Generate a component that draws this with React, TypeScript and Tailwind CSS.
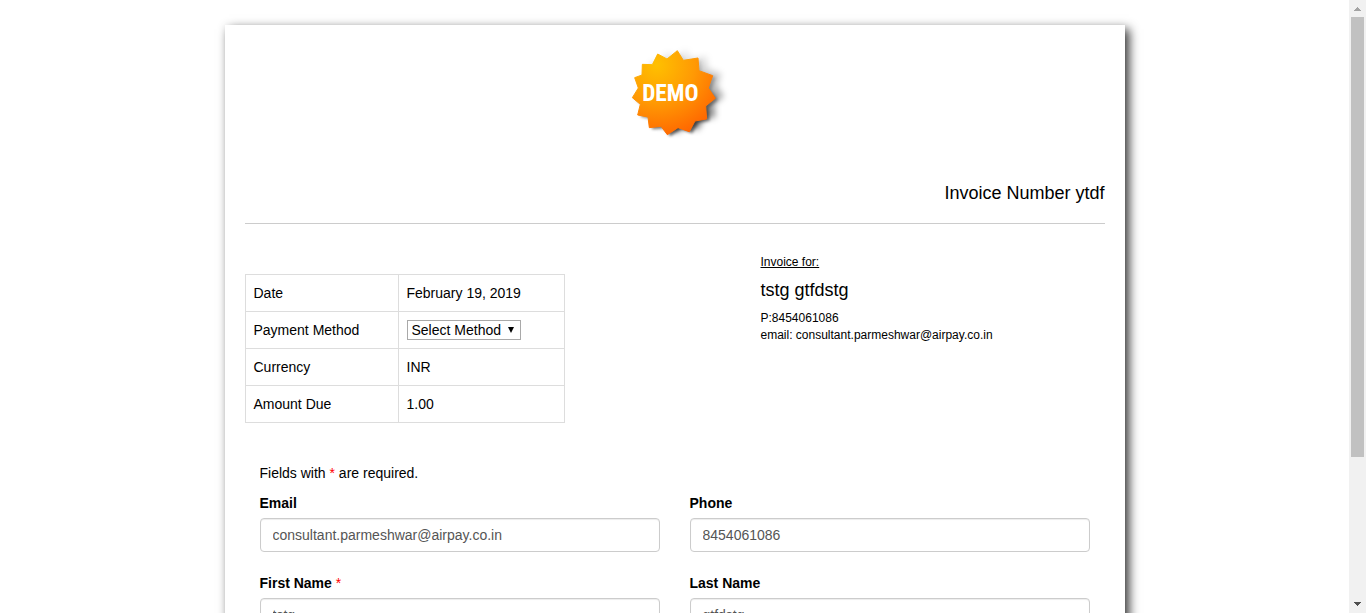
import React from "react";

function DemoBadge() {
  return (
    <svg viewBox="0 0 390 345" className="h-[115px] w-[130px]" role="img" aria-label="Demo">
      <defs>
        <radialGradient id="badge-fill" gradientUnits="userSpaceOnUse" cx="140" cy="90" r="225">
          <stop offset="0" stopColor="#ffc000" />
          <stop offset="0.5" stopColor="#ff9a04" />
          <stop offset="1" stopColor="#ff6400" />
        </radialGradient>
        <linearGradient id="badge-shade" x1="0" y1="0" x2="0" y2="1">
          <stop offset="0" stopColor="#000" stopOpacity="0.04" />
          <stop offset="0.5" stopColor="#000" stopOpacity="0.3" />
          <stop offset="1" stopColor="#000" stopOpacity="0.6" />
        </linearGradient>
        <filter id="badge-soft" x="-20%" y="-20%" width="140%" height="140%">
          <feGaussianBlur stdDeviation="9" />
        </filter>
        <filter id="badge-tight" x="-20%" y="-20%" width="140%" height="140%">
          <feGaussianBlur stdDeviation="4" />
        </filter>
        <path
          id="badge-star"
          strokeLinejoin="round"
          d="M202 47 220 76 264 69 267 107 308 122 295 159 316 190 287 213 290 252 255 258 238 290 204 278 172 299 153 274 118 278 114 246 83 240 91 208 67 188 85 159 74 128 96 120 97 88 127 89 143 57 171 72Z"
        />
      </defs>
      <use href="#badge-star" transform="translate(26 -6)" fill="url(#badge-shade)" filter="url(#badge-soft)" />
      <use href="#badge-star" transform="translate(9 5)" fill="url(#badge-shade)" filter="url(#badge-tight)" />
      <use href="#badge-star" fill="url(#badge-fill)" stroke="url(#badge-fill)" strokeWidth="3" />
      <text
        x="181"
        y="199"
        textAnchor="middle"
        fill="#fff"
        fontSize="70"
        fontWeight="700"
        fontFamily="'Liberation Sans Narrow', 'Roboto Condensed', 'Liberation Sans', Arial, sans-serif"
      >
        DEMO
      </text>
    </svg>
  );
}

function Row({ label, children }: { label: React.ReactNode; children: React.ReactNode }) {
  return (
    <tr>
      <th scope="row" className="w-[153px] border border-[#ddd] p-2 text-left font-normal">
        {label}
      </th>
      <td className="border border-[#ddd] p-2">{children}</td>
    </tr>
  );
}

function Field({ id, label, value, type = "text", required = false }: {
  id: string;
  label: string;
  value: string;
  type?: string;
  required?: boolean;
}) {
  return (
    <div>
      <label htmlFor={id} className="mb-[5px] block font-bold">
        {label}
        {required && <span className="font-normal text-[#f00]"> *</span>}
      </label>
      <input
        id={id}
        type={type}
        defaultValue={value}
        required={required}
        className="block h-[34px] w-full rounded border border-[#ccc] bg-white px-3 text-[#555] shadow-[inset_0_1px_1px_rgba(0,0,0,0.075)] outline-none focus:border-[#66afe9]"
      />
    </div>
  );
}

function ScrollBar() {
  return (
    <div aria-hidden="true" className="flex w-[17px] shrink-0 flex-col items-center bg-[#f1f1f1]">
      <svg className="h-[17px] w-[17px] shrink-0" viewBox="0 0 17 17" shapeRendering="crispEdges">
        <path d="M8 7h1v1h1v1h1v1h1v1H5v-1h1V9h1V8h1z" fill="#a3a3a3" />
      </svg>
      <div className="flex w-[13px] grow flex-col">
        <div className="h-[76%] bg-[#c1c1c1]" />
      </div>
      <svg className="h-[17px] w-[17px] shrink-0" viewBox="0 0 17 17" shapeRendering="crispEdges">
        <path d="M5 6h7v1h-1v1h-1v1H9v1H8V9H7V8H6V7H5z" fill="#505050" />
      </svg>
    </div>
  );
}

export default function App() {
  return (
    <div className="flex h-screen overflow-hidden bg-white font-['Liberation_Sans',Arial,sans-serif] text-sm leading-5 text-black">
      <main className="grow overflow-hidden py-[25px]">
        <article className="mx-auto w-full max-w-[900px] bg-white px-5 pt-[10px] pb-10 shadow-[4px_4px_10px_#333]">
          <div className="flex justify-center">
            <DemoBadge />
          </div>
          <h1 className="mt-[33px] text-right text-lg leading-5">Invoice Number ytdf</h1>
          <hr className="mt-5 border-[#ccc]" />

          <div className="grid grid-cols-5">
            <div className="col-span-3 pt-[50px]">
              <table className="w-[320px] border-collapse">
                <tbody>
                  <Row label="Date">February 19, 2019</Row>
                  <Row label={<label htmlFor="method">Payment Method</label>}>
                    <div className="relative flex h-5 w-[114px]">
                      <select
                        id="method"
                        className="h-5 w-full appearance-none border border-[#a9a9a9] bg-white pl-1 leading-[18px]"
                      >
                        <option>Select Method</option>
                      </select>
                      <svg
                        className="pointer-events-none absolute top-[7px] right-[7px] h-[6px] w-[6px]"
                        viewBox="0 0 6 6"
                        aria-hidden="true"
                      >
                        <path d="M0 0H6L3 6Z" fill="#000" />
                      </svg>
                    </div>
                  </Row>
                  <Row label="Currency">INR</Row>
                  <Row label="Amount Due">1.00</Row>
                </tbody>
              </table>
            </div>
            <address className="col-span-2 pt-[30px] text-xs leading-[17px] not-italic">
              <p className="underline">Invoice for:</p>
              <h2 className="mt-[9px] mb-[10px] text-lg leading-5">tstg gtfdstg</h2>
              <p>P:8454061086</p>
              <p>email: consultant.parmeshwar@airpay.co.in</p>
            </address>
          </div>

          <form className="mt-10 px-[15px]">
            <p>
              Fields with <span className="text-[#f00]">*</span> are required.
            </p>
            <div className="mt-[10px] grid grid-cols-2 gap-x-[30px] gap-y-[21px]">
              <Field id="email" label="Email" type="email" value="consultant.parmeshwar@airpay.co.in" />
              <Field id="phone" label="Phone" type="tel" value="8454061086" />
              <Field id="first-name" label="First Name" value="tstg" required />
              <Field id="last-name" label="Last Name" value="gtfdstg" />
            </div>
          </form>
        </article>
      </main>
      <ScrollBar />
    </div>
  );
}
